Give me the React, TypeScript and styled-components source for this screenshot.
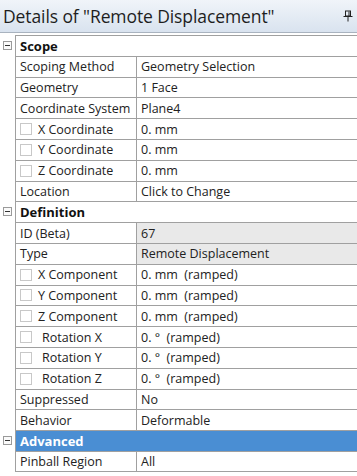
import React from "react";
import styled, { createGlobalStyle } from "styled-components";

const GlobalStyle = createGlobalStyle`
  html, body {
    margin: 0;
    padding: 0;
    background: #ffffff;
  }
  body {
    font-family: "Open Sans", "Noto Sans", sans-serif;
  }
`;

const Panel = styled.div`
  width: 357px;
  height: 476px;
  background: #ffffff;
  overflow: hidden;
`;

const TitleBar = styled.div`
  height: 33px;
  display: flex;
  align-items: center;
  justify-content: space-between;
  padding: 0 4px 0 3px;
  box-sizing: border-box;
  background: linear-gradient(#f0f4f9, #d9e3ef);
  border-bottom: 1px solid #a9b3bf;
`;

const Title = styled.div`
  font-size: 17.5px;
  color: #1e1e1e;
  letter-spacing: -0.1px;
  white-space: nowrap;
`;

const Grid = styled.div`
  margin-top: 2px;
`;

const Row = styled.div`
  display: flex;
  height: 20.8px;
`;

const Gutter = styled.div`
  width: 15px;
  flex: none;
  display: flex;
  align-items: center;
  justify-content: center;
`;

const Toggle = styled.div`
  width: 9px;
  height: 9px;
  box-sizing: border-box;
  border: 1px solid #9a9a9a;
  background: #fafafa;
  position: relative;
  &::after {
    content: "";
    position: absolute;
    left: 1px;
    right: 1px;
    top: 3px;
    height: 1px;
    background: #333;
  }
`;

const Body = styled.div<{ $last?: boolean }>`
  flex: 1;
  display: flex;
  border-left: 1px solid #a0a0a0;
  border-top: 1px solid #a0a0a0;
  border-bottom: ${(p) => (p.$last ? "1px solid #a0a0a0" : "none")};
  min-width: 0;
`;

const Header = styled.div<{ $active?: boolean }>`
  flex: 1;
  display: flex;
  align-items: center;
  padding-left: 4px;
  font-size: 13px;
  font-weight: 700;
  color: ${(p) => (p.$active ? "#ffffff" : "#111")};
  background: ${(p) => (p.$active ? "#4a8ed3" : "#ffffff")};
`;

const Name = styled.div<{ $indent: number }>`
  width: 121px;
  flex: none;
  display: flex;
  align-items: center;
  gap: 6px;
  padding-left: 4px;
  box-sizing: border-box;
  border-right: 1px solid #a0a0a0;
  font-size: 12.5px;
  color: #222;
  white-space: nowrap;
  & > span {
    padding-left: ${(p) => p.$indent}px;
  }
`;

const Check = styled.div`
  width: 12px;
  height: 12px;
  flex: none;
  box-sizing: border-box;
  border: 1px solid #c8c8c8;
  background: #fff;
`;

const Value = styled.div<{ $gray?: boolean }>`
  flex: 1;
  display: flex;
  align-items: center;
  padding-left: 4px;
  font-size: 12.5px;
  color: #222;
  white-space: pre;
  background: ${(p) => (p.$gray ? "#e9e9e9" : "#ffffff")};
`;

type Item =
  | { kind: "head"; label: string; active?: boolean }
  | { kind: "prop"; label: string; value: string; check?: boolean; indent?: number; gray?: boolean };

const items: Item[] = [
  { kind: "head", label: "Scope" },
  { kind: "prop", label: "Scoping Method", value: "Geometry Selection" },
  { kind: "prop", label: "Geometry", value: "1 Face" },
  { kind: "prop", label: "Coordinate System", value: "Plane4" },
  { kind: "prop", label: "X Coordinate", value: "0. mm", check: true },
  { kind: "prop", label: "Y Coordinate", value: "0. mm", check: true },
  { kind: "prop", label: "Z Coordinate", value: "0. mm", check: true },
  { kind: "prop", label: "Location", value: "Click to Change" },
  { kind: "head", label: "Definition" },
  { kind: "prop", label: "ID (Beta)", value: "67", gray: true },
  { kind: "prop", label: "Type", value: "Remote Displacement", gray: true },
  { kind: "prop", label: "X Component", value: "0. mm  (ramped)", check: true },
  { kind: "prop", label: "Y Component", value: "0. mm  (ramped)", check: true },
  { kind: "prop", label: "Z Component", value: "0. mm  (ramped)", check: true },
  { kind: "prop", label: "Rotation X", value: "0. °  (ramped)", check: true, indent: 4 },
  { kind: "prop", label: "Rotation Y", value: "0. °  (ramped)", check: true, indent: 4 },
  { kind: "prop", label: "Rotation Z", value: "0. °  (ramped)", check: true, indent: 4 },
  { kind: "prop", label: "Suppressed", value: "No" },
  { kind: "prop", label: "Behavior", value: "Deformable" },
  { kind: "head", label: "Advanced", active: true },
  { kind: "prop", label: "Pinball Region", value: "All" },
];

const PinIcon = () => (
  <svg width="10" height="12" viewBox="0 0 10 12">
    <rect x="2.5" y="1" width="5" height="5" fill="none" stroke="#222" strokeWidth="1" />
    <line x1="6" y1="1.5" x2="6" y2="6" stroke="#222" strokeWidth="1" />
    <line x1="0.5" y1="6.5" x2="9.5" y2="6.5" stroke="#222" strokeWidth="1" />
    <line x1="5" y1="7" x2="5" y2="11.5" stroke="#222" strokeWidth="1" />
  </svg>
);

export default function App() {
  return (
    <>
      <GlobalStyle />
      <Panel>
        <TitleBar>
          <Title>Details of "Remote Displacement"</Title>
          <PinIcon />
        </TitleBar>
        <Grid>
          {items.map((it, i) => {
            const last = i === items.length - 1;
            if (it.kind === "head") {
              return (
                <Row key={i}>
                  <Gutter>
                    <Toggle />
                  </Gutter>
                  <Body $last={last}>
                    <Header $active={it.active}>{it.label}</Header>
                  </Body>
                </Row>
              );
            }
            return (
              <Row key={i}>
                <Gutter />
                <Body $last={last}>
                  <Name $indent={it.indent ?? 0}>
                    {it.check && <Check />}
                    <span>{it.label}</span>
                  </Name>
                  <Value $gray={it.gray}>{it.value}</Value>
                </Body>
              </Row>
            );
          })}
        </Grid>
      </Panel>
    </>
  );
}
